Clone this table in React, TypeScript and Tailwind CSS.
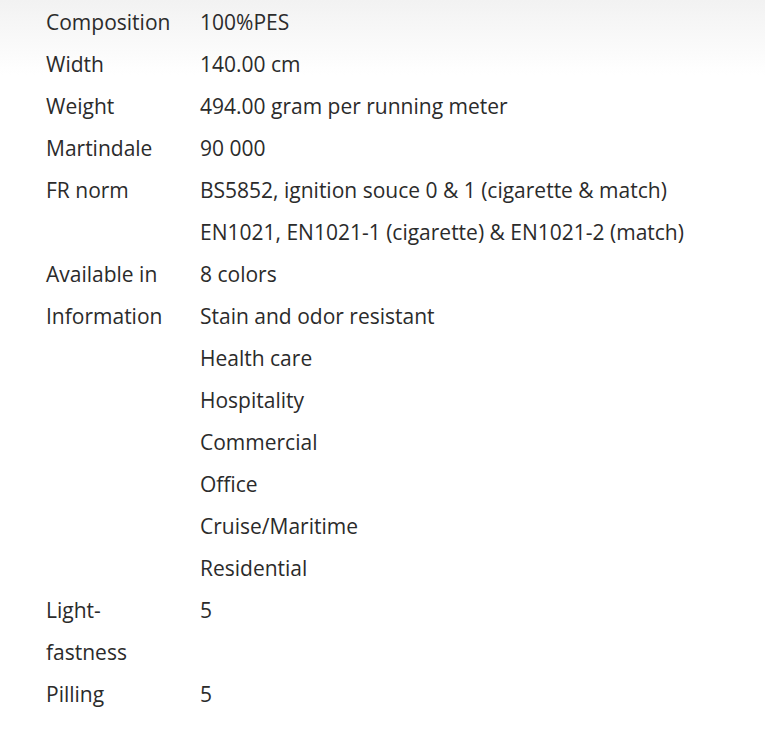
import React from 'react';

interface SpecRow {
  label: string;
  values: string[];
}

const specs: SpecRow[] = [
  { label: 'Composition', values: ['100%PES'] },
  { label: 'Width', values: ['140.00 cm'] },
  { label: 'Weight', values: ['494.00 gram per running meter'] },
  { label: 'Martindale', values: ['90 000'] },
  {
    label: 'FR norm',
    values: [
      'BS5852, ignition souce 0 & 1 (cigarette & match)',
      'EN1021, EN1021-1 (cigarette) & EN1021-2 (match)',
    ],
  },
  { label: 'Available in', values: ['8 colors'] },
  {
    label: 'Information',
    values: [
      'Stain and odor resistant',
      'Health care',
      'Hospitality',
      'Commercial',
      'Office',
      'Cruise/Maritime',
      'Residential',
    ],
  },
  { label: 'Light-fastness', values: ['5'] },
  { label: 'Pilling', values: ['5'] },
];

const App: React.FC = () => {
  return (
    <div
      className="w-[765px] h-[745px] bg-[linear-gradient(to_bottom,#f2f2f2_0px,#ffffff_75px)] text-[#2b2b2b] text-[21px] leading-[42px] font-['Open_Sans',sans-serif] pt-px pl-[46px]"
    >
      {specs.map(row => (
        <div key={row.label} className="flex">
          <div className="w-[130px] mr-[24px] shrink-0 break-words">{row.label}</div>
          <div className="flex flex-col">
            {row.values.map(v => (
              <span key={v}>{v}</span>
            ))}
          </div>
        </div>
      ))}
    </div>
  );
};

export default App;
